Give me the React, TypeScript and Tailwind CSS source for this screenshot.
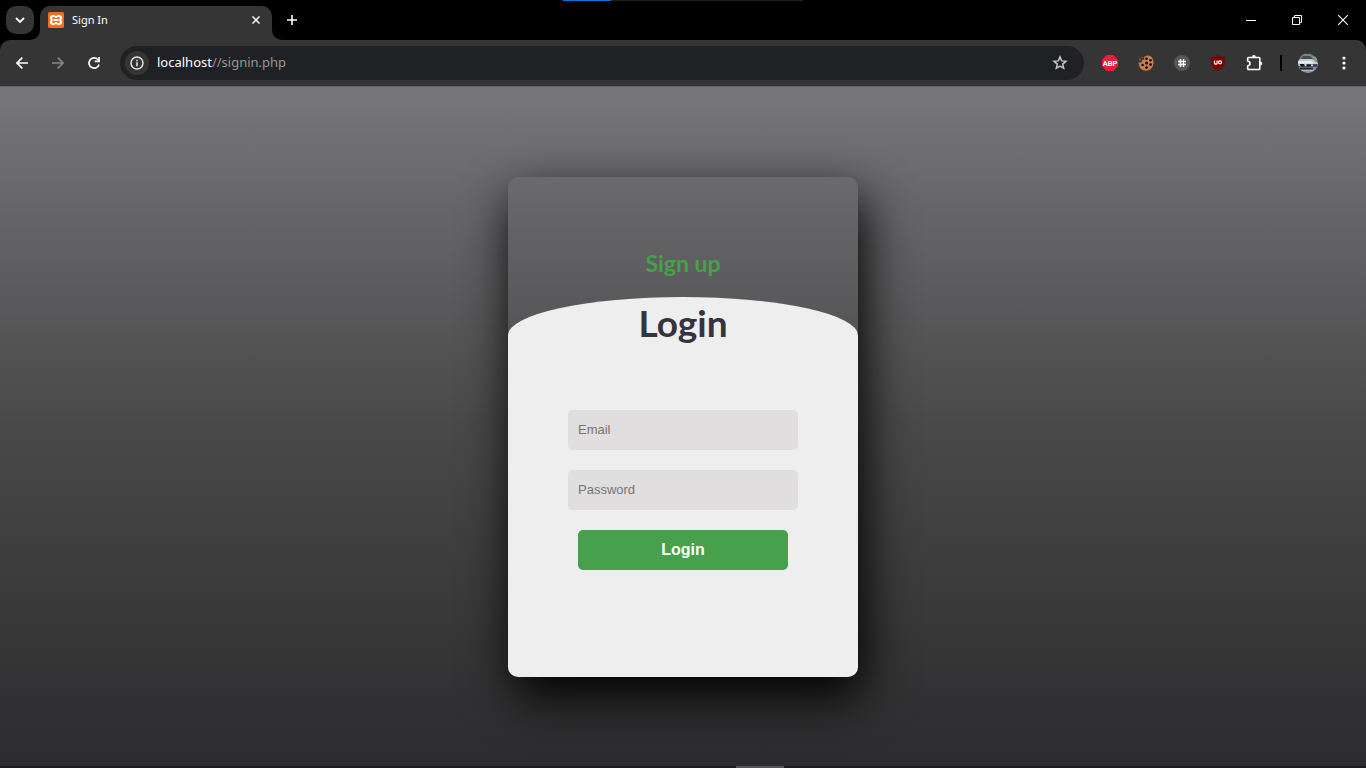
import React from "react";

const iconButton = "flex items-center justify-center";

function TabStrip() {
  return (
    <div className="relative flex h-10 items-start bg-black pl-1.5">
      <div className="absolute left-1/2 top-0 flex h-px w-[240px] -translate-x-1/2 bg-[#1f1f1f]">
        <div className="h-px w-12 bg-[#0078d7]" />
      </div>
      <button aria-label="Search tabs" className={`${iconButton} mt-1.5 size-7 rounded-[10px] bg-[#353535]`}>
        <svg width="10" height="6" viewBox="0 0 10 6" fill="none" stroke="#fff" strokeWidth="1.8">
          <path d="M1 1l4 4 4-4" />
        </svg>
      </button>
      <div className="relative ml-1.5 mt-1.5 flex h-[34px] w-[232px] items-center rounded-t-[10px] bg-[#353535] pb-1.5 pl-2 pr-2">
        <svg className="absolute -left-2.5 bottom-0" width="10" height="10" viewBox="0 0 10 10">
          <path d="M10 0v10H0A10 10 0 0 0 10 0z" fill="#353535" />
        </svg>
        <svg className="absolute -right-2.5 bottom-0" width="10" height="10" viewBox="0 0 10 10">
          <path d="M0 0v10h10A10 10 0 0 1 0 0z" fill="#353535" />
        </svg>
        <svg width="16" height="16" viewBox="0 0 16 16">
          <rect width="16" height="16" rx="1.5" fill="#f0711f" />
          <path
            d="M5.300 3.900c1.500 0 1.700 1 2.700 1s1.200-1 2.700-1c1.400 0 2.300.8 2.300 2 0 1-.8 1.400-.8 2.100s.8 1.100.8 2.100c0 1.200-.9 2-2.300 2-1.500 0-1.700-1-2.700-1s-1.200 1-2.700 1c-1.400 0-2.300-.8-2.300-2 0-1 .8-1.400.8-2.100S3 6.900 3 5.900c0-1.200.9-2 2.300-2z"
            fill="none"
            stroke="#fff"
            strokeWidth="2"
          />
          <path d="M5.500 8h5" stroke="#fff" strokeWidth="2" />
        </svg>
        <span className="ml-2 flex-1 text-[11px] text-white">Sign In</span>
        <button aria-label="Close tab" className={`${iconButton} size-4`}>
          <svg width="8" height="8" viewBox="0 0 8 8" stroke="#fff" strokeWidth="1.5">
            <path d="M0.500 0.500l7 7M7.500 0.500l-7 7" />
          </svg>
        </button>
      </div>
      <button aria-label="New tab" className={`${iconButton} ml-1.5 mt-1.5 size-7`}>
        <svg width="10" height="10" viewBox="0 0 10 10" stroke="#fff" strokeWidth="1.6">
          <path d="M5 0v10M0 5h10" />
        </svg>
      </button>
      <div className="ml-auto flex h-10">
        <button aria-label="Minimize" className={`${iconButton} w-[46px]`}>
          <svg width="10" height="10" viewBox="0 0 10 10" stroke="#fff">
            <path d="M0 5.500h10" />
          </svg>
        </button>
        <button aria-label="Restore" className={`${iconButton} w-[46px]`}>
          <svg width="10" height="10" viewBox="0 0 10 10" fill="none" stroke="#fff">
            <path d="M0.500 2.500h7v7h-7zM2.500 2.500v-2h7v7h-2" />
          </svg>
        </button>
        <button aria-label="Close" className={`${iconButton} w-[46px]`}>
          <svg width="10" height="10" viewBox="0 0 10 10" stroke="#fff" strokeWidth="1.100">
            <path d="M0 0l10 10M10 0L0 10" />
          </svg>
        </button>
      </div>
    </div>
  );
}

function Extensions() {
  return (
    <div className="flex items-center gap-3">
      <button aria-label="Adblock Plus" className={`${iconButton} size-6`}>
        <svg width="16" height="16" viewBox="0 0 16 16">
          <path d="M4.700 0h6.600L16 4.700v6.600L11.300 16H4.700L0 11.300V4.700z" fill="#ee1c3d" />
          <text x="8" y="10.800" textAnchor="middle" fontSize="7.500" fontWeight="700" fill="#fff" className="font-['Roboto',sans-serif]">
            ABP
          </text>
        </svg>
      </button>
      <button aria-label="Cookie manager" className={`${iconButton} size-6`}>
        <svg width="16" height="16" viewBox="0 0 16 16">
          <path d="M6 2C8 .3 10.500 0 12 1c2.400 1 3.700 4 3.500 7A7.600 7.600 0 0 1 8 15.700C4.500 15.700 1.500 13.500 1.200 10.500L.3 7.500l3 .3 1-2.800 2-.5z" fill="#c67d4f" />
          <g fill="#15100d">
            <circle cx="8.500" cy="3.700" r="1.300" />
            <circle cx="12.500" cy="5.200" r="1.300" />
            <circle cx="8.600" cy="8" r="1.500" />
            <circle cx="4.600" cy="10" r="1.300" />
            <circle cx="12.600" cy="9.600" r="1.400" />
            <circle cx="8.600" cy="12.600" r="1.400" />
          </g>
          <g fill="#a9653c">
            <circle cx="2" cy="4.500" r="0.900" />
            <circle cx="4.300" cy="2.500" r="0.700" />
          </g>
        </svg>
      </button>
      <button aria-label="Hashtag tool" className={`${iconButton} size-6`}>
        <svg width="16" height="16" viewBox="0 0 16 16" stroke="#fff" strokeWidth="1.500">
          <circle cx="8" cy="8" r="8" fill="#555657" stroke="none" />
          <path d="M6.500 4v8M9.500 4v8M4 6.500h8M4 9.500h8" />
        </svg>
      </button>
      <button aria-label="uBlock Origin" className={`${iconButton} size-6`}>
        <svg width="16" height="16" viewBox="0 0 16 16" fill="none">
          <path d="M8 .5c2 1.200 4.300 1.700 6.700 1.700v5.200c0 4-2.700 6.400-6.700 8.100-4-1.700-6.700-4.100-6.700-8.100V2.200C3.700 2.200 6 1.700 8 .5z" fill="#800000" stroke="#5c1818" />
          <path d="M4.500 5.500v2.400c0 1.700 2.600 1.700 2.600 0V5.500" stroke="#fff" strokeWidth="1.200" />
          <circle cx="10" cy="7.300" r="1.500" stroke="#fff" strokeWidth="1.200" />
        </svg>
      </button>
      <button aria-label="Extensions" className={`${iconButton} size-6`}>
        <svg width="18" height="18" viewBox="0 0 18 18">
          <path d="M3.500 3.500h10.500a.8 .8 0 0 1 .8.8v10.400a.8 .8 0 0 1-.8.8H3.500a.8 .8 0 0 1-.8-.8V12c3-.6 3-4.400 0-5V4.300a.8 .8 0 0 1 .8-.8z" fill="none" stroke="#fff" strokeWidth="1.600" />
          <path d="M7 3a1.900 1.900 0 0 1 3.800 0zM15.300 7.600a1.900 1.900 0 0 1 0 3.800z" fill="#fff" />
        </svg>
      </button>
    </div>
  );
}

function Avatar() {
  return (
    <svg width="20" height="20" viewBox="0 0 20 20">
      <defs>
        <clipPath id="avatar">
          <circle cx="10" cy="10" r="10" />
        </clipPath>
      </defs>
      <g clipPath="url(#avatar)">
        <rect width="20" height="20" fill="#5d6769" />
        <path d="M0 0h20v6H0z" fill="#2f3a3a" />
        <path d="M4 1h9l5 6H1z" fill="#7b8584" />
        <path d="M5 3h7l3 3H3z" fill="#414d50" />
        <path d="M14 2l5 3v4l-3-2z" fill="#8b9698" />
        <path d="M0 7.500l3-1.500h11l6 4v3H0z" fill="#c3cad1" />
        <path d="M0 8h13l3 2.500H0z" fill="#e8ebf0" />
        <path d="M1.500 11h4.500l1 2.500H3zM8.500 11.200h5l-1 2.300H8.500z" fill="#101722" />
        <path d="M14.500 11h5v2l-4 1.500z" fill="#3a4656" />
        <path d="M0 14h20v6H0z" fill="#88919a" />
        <path d="M2 14.500h13v2H2z" fill="#252d36" />
        <path d="M3 17h13v1H3z" fill="#aeb6bd" />
      </g>
    </svg>
  );
}

function Toolbar() {
  return (
    <div className="bg-black">
      <div className="flex h-[46px] items-center rounded-t-[10px] bg-[#353535] pl-2.5 pr-2.5">
        <div className="flex gap-3">
          <button aria-label="Back" className={`${iconButton} size-6`}>
            <svg width="12" height="12" viewBox="0 0 12 12" fill="none" stroke="#fff" strokeWidth="1.700">
              <path d="M12 6H1.200M6.300 .7L1 6l5.300 5.300" />
            </svg>
          </button>
          <button aria-label="Forward" className={`${iconButton} size-6`}>
            <svg width="12" height="12" viewBox="0 0 12 12" fill="none" stroke="#868686" strokeWidth="1.700">
              <path d="M0 6h10.800M5.700 .7L11 6l-5.300 5.300" />
            </svg>
          </button>
          <button aria-label="Reload" className={`${iconButton} size-6`}>
            <svg width="14" height="14" viewBox="0 0 14 14">
              <path d="M12 8.400A5.100 5.100 0 1 1 10.800 3.500L12 4.800" fill="none" stroke="#fff" strokeWidth="1.700" />
              <path d="M12.900 1v5.200H7.700V4.600h3.600V1z" fill="#fff" />
            </svg>
          </button>
        </div>
        <div className="ml-3.5 flex h-[34px] flex-1 items-center rounded-full bg-[#202124] pl-[5px] pr-3">
          <button aria-label="Site information" className={`${iconButton} size-6 rounded-full bg-[#353535]`}>
            <svg width="14" height="14" viewBox="0 0 14 14">
              <circle cx="7" cy="7" r="6" fill="none" stroke="#e3e3e3" strokeWidth="1.500" />
              <path d="M6.200 6.200h1.600v4H6.200zM6.200 3.700h1.600v1.500H6.200z" fill="#e3e3e3" />
            </svg>
          </button>
          <a href="#" className="ml-2 flex-1 text-[13px] text-[#939699]">
            <span className="text-white">localhost</span>//signin.php
          </a>
          <button aria-label="Bookmark this page" className={`${iconButton} size-6`}>
            <svg width="16" height="16" viewBox="0 0 16 16">
              <path d="M8 1.900l1.700 4 4.300.4-3.300 2.800 1 4.200L8 11.100l-3.700 2.200 1-4.200L2 6.300l4.300-.4z" fill="none" stroke="#c7c7c7" strokeWidth="1.500" />
            </svg>
          </button>
        </div>
        <div className="ml-3.5">
          <Extensions />
        </div>
        <div className="ml-3.5 h-4 w-0.5 bg-black" />
        <button aria-label="Profile" className="ml-4">
          <Avatar />
        </button>
        <button aria-label="Menu" className={`${iconButton} ml-3.5 size-6`}>
          <svg width="4" height="14" viewBox="0 0 4 14" fill="#fff">
            <circle cx="2" cy="2" r="1.600" />
            <circle cx="2" cy="7" r="1.600" />
            <circle cx="2" cy="12" r="1.600" />
          </svg>
        </button>
      </div>
    </div>
  );
}

function LoginCard() {
  return (
    <section className="h-[500px] w-[350px] overflow-hidden rounded-[10px] shadow-[5px_20px_50px_#000]">
      <div className="flex h-[120px] items-end justify-center pb-[18px] font-['Lato',sans-serif]">
        <a href="#" className="text-[23px]/[32px] font-bold text-[#47a04b]">
          Sign up
        </a>
      </div>
      <form className="flex h-[460px] flex-col items-center rounded-[60%/10%] bg-[#eee] font-['Liberation_Sans',Arial,sans-serif]" onSubmit={(e) => e.preventDefault()}>
        <h1 className="h-[113px] pt-0.5 font-['Lato',sans-serif] text-[37px]/[48px] font-bold text-[#383240]">Login</h1>
        <input
          type="email"
          aria-label="Email"
          placeholder="Email"
          className="h-10 w-[230px] rounded-[5px] bg-[#e0dedf] px-2.5 text-[13px] outline-none placeholder:text-[#757575]"
        />
        <input
          type="password"
          aria-label="Password"
          placeholder="Password"
          className="mt-5 h-10 w-[230px] rounded-[5px] bg-[#e0dedf] px-2.5 text-[13px] outline-none placeholder:text-[#757575]"
        />
        <button className="mt-5 h-10 w-[210px] rounded-[5px] bg-[#47a04b] text-base font-bold text-white">Login</button>
      </form>
    </section>
  );
}

export default function App() {
  return (
    <div className="flex min-h-screen flex-col font-['Noto_Sans',sans-serif]">
      <TabStrip />
      <Toolbar />
      <main className="flex flex-1 items-center justify-center overflow-hidden border-t border-[#626165] bg-linear-to-b from-[#77767b] via-[#494949] to-[#2c2c2e]">
        <LoginCard />
      </main>
      <div className="flex h-0.5 justify-center bg-[#1d1d1d]">
        <div className="ml-[154px] h-0.5 w-12 bg-[#555]" />
      </div>
    </div>
  );
}
